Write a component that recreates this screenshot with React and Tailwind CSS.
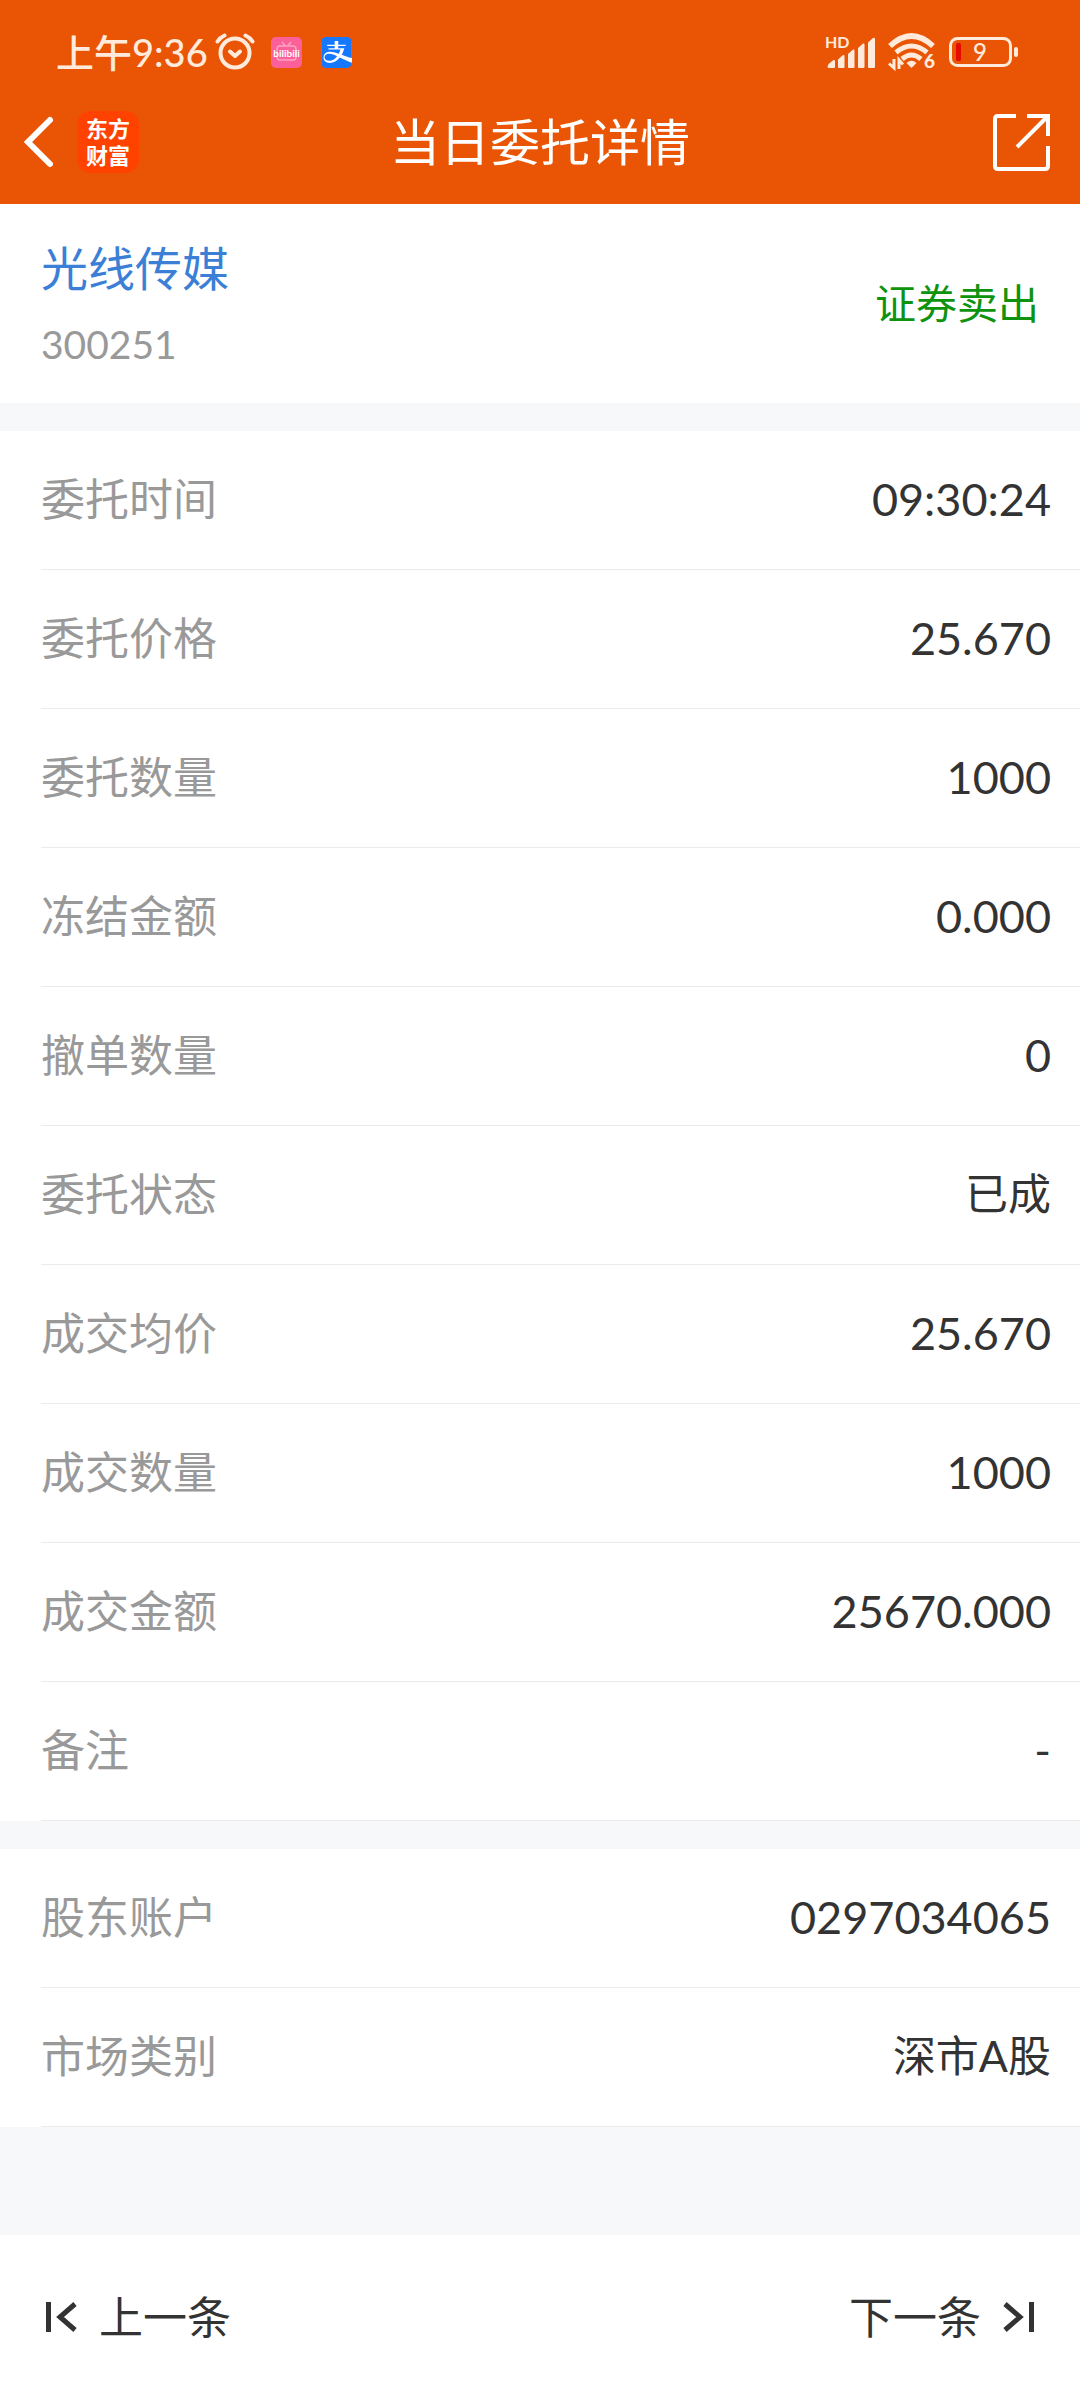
import { SiAlipay } from "react-icons/si";

const ORDER = [
  ["委托时间", "09:30:24"],
  ["委托价格", "25.670"],
  ["委托数量", "1000"],
  ["冻结金额", "0.000"],
  ["撤单数量", "0"],
  ["委托状态", "已成"],
  ["成交均价", "25.670"],
  ["成交数量", "1000"],
  ["成交金额", "25670.000"],
  ["备注", "-"],
];

const ACCOUNT = [
  ["股东账户", "0297034065"],
  ["市场类别", "深市A股"],
];

function AlarmIcon() {
  return (
    <svg width="40" height="38" viewBox="0 0 40 38" fill="none" stroke="#ffeadc" strokeWidth="4" strokeLinecap="round" strokeLinejoin="round" aria-hidden="true">
      <circle cx="20" cy="20" r="14.500" />
      <path d="M15 18.500l5 4.500 5-4.500" strokeWidth="4" />
      <path d="M2.500 8.500q2.500-4 7-6M37.500 8.500q-2.500-4-7-6" />
    </svg>
  );
}

function BiliIcon() {
  return (
    <svg className="rounded-[5px] bg-[#fb6198]" width="31" height="31" viewBox="0 0 31 31" aria-hidden="true">
      <g fill="none" stroke="#ffa3c3" strokeWidth="1.500">
        <rect x="6" y="9" width="19" height="14" rx="3" />
        <path d="M11 5l3 3.500M20 5l-3 3.500" />
      </g>
      <text x="15.500" y="20" textAnchor="middle" fontSize="10" fontWeight="700" fill="#fff" fontFamily="Lato, sans-serif">bilibili</text>
    </svg>
  );
}

function SignalIcon() {
  return (
    <svg width="52" height="44" viewBox="0 -4 52 44" fill="#ffeadc" aria-hidden="true">
      <text x="0" y="14" fontSize="16" fontWeight="700" fontFamily="Lato, sans-serif">HD</text>
      <path d="M3.500 30l5-4q1.500-.5 1.500 1V33q0 1-1 1H4q-1.500 0-1.500-1.500zM13 25.500l5-4.500q1.500-.5 1.500 1V33q0 1-1 1h-4.500q-1 0-1-1zM23 20l5-4.500q1.500-.5 1.500 1V33q0 1-1 1h-4.500q-1 0-1-1zM33 14l5-4.500q1.500-.5 1.500 1V33q0 1-1 1h-4.500q-1 0-1-1zM43 8.500l5-4.500q2-1 2 1V33q0 1-1 1h-5q-1 0-1-1z" />
    </svg>
  );
}

function WifiIcon() {
  return (
    <svg width="50" height="40" viewBox="0 0 50 40" fill="none" stroke="#ffeadc" aria-hidden="true">
      <path d="M2 14Q23.500-6 45 14" strokeWidth="5.500" />
      <path d="M8 20.500Q23.500 7.500 39 20.500" strokeWidth="5" />
      <path d="M14 27Q23.500 19 33 27" strokeWidth="5" />
      <path d="M18.500 31q5-4.500 10 0l-5 5z" fill="#ffeadc" stroke="none" />
      <path d="M6 27v9l-5-4.500M11 37v-9l4 4.500" strokeWidth="3" />
      <text x="36" y="36" fontSize="19" fontWeight="900" fill="#ffeadc" stroke="none" fontFamily="Lato, sans-serif">6</text>
    </svg>
  );
}

function BatteryIcon() {
  return (
    <svg width="70" height="32" viewBox="0 0 70 32" fill="none" aria-hidden="true">
      <rect x="1.500" y="2.500" width="60" height="27" rx="7" stroke="#ffeadc" strokeWidth="3" />
      <rect x="7" y="7" width="5" height="18" rx="1.500" fill="#e60b00" />
      <rect x="65" y="11" width="4" height="10" rx="2" fill="#ffeadc" />
      <text x="31" y="25" textAnchor="middle" fontSize="24" fontWeight="500" fill="#ffeadc" fontFamily="Lato, sans-serif">9</text>
    </svg>
  );
}

function StatusBar() {
  return (
    <div className="flex h-20 items-center justify-between pt-6 pr-[61px] pl-[56px]">
      <div className="flex items-center">
        <span className="text-[38px] leading-[56px] font-medium text-[#ffeadc]">上午9:36</span>
        <span className="ml-[7px]"><AlarmIcon /></span>
        <span className="ml-4"><BiliIcon /></span>
        <span className="ml-[19px] rounded-[7px] bg-white">
          <SiAlipay className="text-[#1677ff]" size={31} aria-hidden="true" />
        </span>
      </div>
      <div className="flex items-center gap-[11px]">
        <SignalIcon />
        <WifiIcon />
        <BatteryIcon />
      </div>
    </div>
  );
}

function NavBar() {
  return (
    <div className="grid h-[124px] grid-cols-[1fr_auto_1fr] items-center px-[27px]">
      <div className="flex items-center gap-5">
        <button type="button" aria-label="返回">
          <svg width="30" height="50" viewBox="4 0 30 50" fill="none" stroke="#fff" strokeWidth="6" aria-hidden="true" overflow="visible">
            <path d="M27 3L5 25l22 22" strokeLinecap="round" strokeLinejoin="miter" />
          </svg>
        </button>
        <span className="grid size-[62px] place-content-center rounded-[14px] bg-[#ff4200] text-center text-[22px] leading-[27px] font-bold text-white">
          东方
          <br />
          财富
        </span>
      </div>
      <h1 className="text-[50px] leading-[72px] text-white">当日委托详情</h1>
      <button type="button" aria-label="分享" className="justify-self-end">
        <svg width="62" height="60" viewBox="0 0 62 60" fill="none" stroke="#fff" strokeWidth="4" aria-hidden="true">
          <path d="M25 4H7Q4 4 4 7v47q0 3 3 3h47q3 0 3-3V34" />
          <path d="M36 4h21v20M56 5L26 35" />
        </svg>
      </button>
    </div>
  );
}

function Rows({ items }) {
  return (
    <dl className="bg-white">
      {items.map(([label, value]) => (
        <div key={label} className="pl-[41px]">
          <div className="flex h-[139px] items-center justify-between border-b border-[#ebebed] pr-[29px] pb-[2px]">
            <dt className="text-[44px] leading-[64px] text-[#999999]">{label}</dt>
            <dd className={/^[\d.:-]+$/.test(value) ? "text-[45px] leading-[64px] text-[#333333]" : "text-[43px] leading-[64px] text-[#333333]"}>
              {value}
            </dd>
          </div>
        </div>
      ))}
    </dl>
  );
}

function StepIcon({ className }) {
  return (
    <svg className={className} width="32" height="30" viewBox="0 0 32 30" fill="none" stroke="#333" strokeWidth="5" aria-hidden="true">
      <path d="M3.500 0v30M30 2L15 15l15 13" />
    </svg>
  );
}

export default function App() {
  return (
    <div className="flex min-h-screen flex-col bg-[#f7f8fa] font-[Lato,'Noto_Sans_CJK_SC',sans-serif]">
      <header className="bg-[#e95504]">
        <StatusBar />
        <NavBar />
      </header>
      <main className="flex grow flex-col gap-7">
        <section className="flex h-[199px] items-center justify-between bg-white pr-[41px] pl-[41px]">
          <div className="pt-1">
            <a href="#stock" className="block text-[47px] leading-[72px] text-[#3b7fd6]">光线传媒</a>
            <p className="mt-1 text-[39px] leading-[72px] text-[#999999]">300251</p>
          </div>
          <p className="text-[41px] leading-[64px] text-[#0f930f]">证券卖出</p>
        </section>
        <Rows items={ORDER} />
        <Rows items={ACCOUNT} />
      </main>
      <footer className="flex h-[165px] items-center justify-between bg-white px-[45px] pb-[2px] text-[44px] leading-[64px] text-[#333333]">
        <button type="button" className="flex items-center gap-[22px]">
          <StepIcon />
          上一条
        </button>
        <button type="button" className="flex items-center gap-[22px]">
          下一条
          <StepIcon className="rotate-180" />
        </button>
      </footer>
    </div>
  );
}
